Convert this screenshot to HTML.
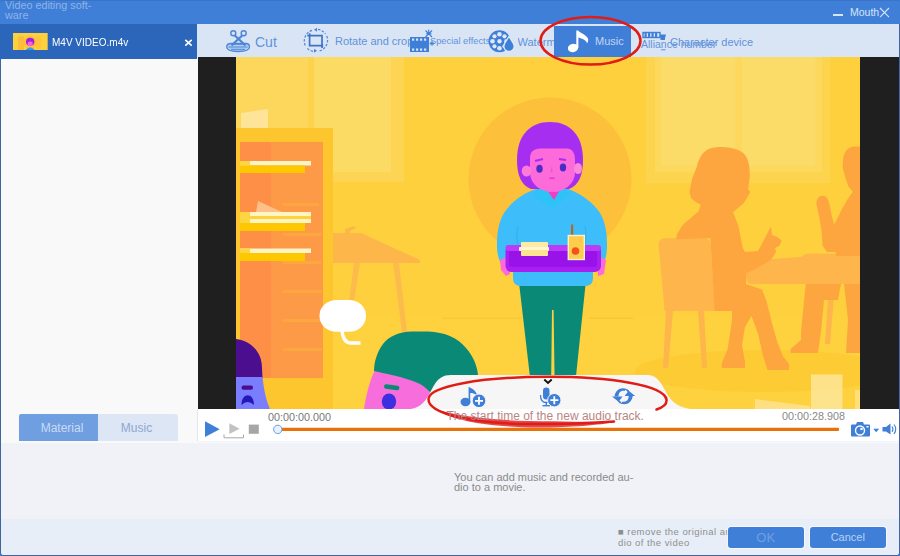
<!DOCTYPE html>
<html>
<head>
<meta charset="utf-8">
<title>Video editing software</title>
<style>
*{box-sizing:border-box;margin:0;padding:0}
html,body{width:900px;height:556px;overflow:hidden;background:#3f7fd7;font-family:"Liberation Sans",sans-serif}
#win{position:absolute;left:0;top:0;width:900px;height:556px;background:#3f66a2;overflow:hidden;border-radius:3px 3px 4px 4px}
#inner{left:1px;top:24px;width:898px;height:531px;background:#f0f3f8;border-radius:0 0 3px 3px}
.abs{position:absolute}
#title{left:0;top:0;width:900px;height:24px;background:#3f7fd7;border-top:1px solid #3a74c6}
#ttext{left:5px;top:0px;width:100px;color:#8fb3e8;font-size:10.8px;line-height:10px;white-space:nowrap}
#mouth{left:850px;top:5px;color:#d5e4f8;font-size:10.5px;line-height:14px}
#lefttab{left:0;top:24px;width:197px;height:36px;background:#2c66ba}
#fname{left:51.5px;top:35px;color:#fff;font-size:11.2px;line-height:14px;transform:scaleX(.895);transform-origin:0 0;white-space:nowrap}
#toolbar{left:197px;top:24px;width:702px;height:33px;background:#d9e5f5}
.tb{color:#6192db;font-size:11px;line-height:14px;white-space:nowrap}
#leftpanel{left:1px;top:59px;width:197px;height:383px;background:#f9f9fa}
#videobg{left:198px;top:57px;width:701px;height:352px;background:#1f1f1f}
#ctrl{left:197px;top:409px;width:702px;height:32px;background:#fff;border-left:1px solid #e2e6ee}
#bottom{left:1px;top:442px;width:898px;height:77px;background:#f0f2f7;border-top:1px solid #f8f9fb}
#bottom2{left:1px;top:519px;width:898px;height:36px;background:#e8eef8;border-radius:0 0 3px 3px}
.btn{background:#3f7fd7;box-shadow:0 0 0 1px rgba(255,255,255,.55);color:#cfe0f7;font-size:12px;text-align:center;line-height:21px;height:21px;top:527px}
.time{color:#777;font-size:11px;line-height:12px}
</style>
</head>
<body>
<div id="win">
<div id="inner" class="abs"></div>
<div id="title" class="abs"></div>
<div id="ttext" class="abs">Video editing soft-<br>ware</div>
<div id="mouth" class="abs">Mouth</div>
<div id="lefttab" class="abs"></div>
<div id="fname" class="abs">M4V VIDEO.m4v</div>
<div id="toolbar" class="abs"></div>
<div id="leftpanel" class="abs"></div>
<div id="videobg" class="abs"></div>

<svg class="abs" style="left:236px;top:57px" width="624" height="352" viewBox="236 57 624 352">
<rect x="236" y="57" width="624" height="352" fill="#fed03e"/>
<!-- floor -->
<rect x="236" y="318" width="624" height="91" fill="#fed13f"/>
<ellipse cx="765" cy="371" rx="130" ry="21" fill="#fdcb33"/><rect x="589" y="317.500" width="44" height="1.500" fill="#f8c538"/><rect x="442" y="317.500" width="80" height="1.500" fill="#f9c83a"/>
<!-- left window -->
<rect x="236" y="57" width="168" height="125" fill="#fdd453"/>
<rect x="236" y="57" width="72" height="115" fill="#fdd75c"/>
<rect x="308" y="57" width="6" height="125" fill="#fdd24c"/>
<rect x="314" y="57" width="77" height="115" fill="#fcdb65"/>
<!-- right window -->
<rect x="646" y="57" width="184" height="126" fill="#fdd44e"/>
<rect x="655" y="57" width="167" height="115.300" fill="#fcd85c"/>
<rect x="661" y="57" width="74.300" height="108.700" fill="#fcdc69"/>
<rect x="742" y="57" width="73.300" height="108.700" fill="#fcdc69"/>
<!-- halo -->
<circle cx="550" cy="179" r="81.500" fill="#fdc03a"/>
<!-- table left -->
<path d="M333,233 L361,233 L420,260 L420,263 L333,263 Z" fill="#fdb64a"/>
<path d="M345,233 L345,229 L354,226 L356,228 L350,231 L350,233 Z" fill="#fdb64a"/>
<path d="M354,263 L360,263 L354,302 L349,302 Z" fill="#fdbb4c"/>
<path d="M393,263 L399,263 L408,340 L403,340 Z" fill="#fdbb4c"/>
<!-- shelf -->
<path d="M241,113 L268,109 L268,128 L241,128 Z" fill="#fde498"/>
<rect x="236" y="128" width="97" height="281" fill="#fdc52e"/>
<rect x="240" y="142" width="83" height="236" fill="#fd9a48"/>
<rect x="240" y="142" width="31" height="236" fill="#fd8f47"/>
<g fill="#fda83f">
<rect x="283" y="203" width="36" height="3"/><rect x="283" y="233" width="38" height="3"/><rect x="283" y="261" width="38" height="3"/>
<rect x="283" y="290" width="39" height="3"/><rect x="283" y="319" width="39" height="3"/><rect x="283" y="348" width="39" height="3"/>
</g>
<path d="M256,212 L258,201 L282,212 Z" fill="#fdc08a"/>
<g>
<rect x="240" y="161" width="71" height="4.500" fill="#fff4c4"/><rect x="240" y="165.500" width="65" height="7.500" fill="#fdc800"/>
<rect x="240" y="212" width="71" height="4" fill="#fff4c4"/><rect x="240" y="216" width="71" height="3" fill="#fdd23a"/>
<rect x="240" y="219" width="71" height="4" fill="#fff4c4"/><rect x="240" y="223" width="65" height="8" fill="#fdc800"/>
<rect x="240" y="248.500" width="71" height="4.500" fill="#fff4c4"/><rect x="240" y="253" width="65" height="8" fill="#fdc800"/>
<rect x="240" y="161" width="10" height="4.500" fill="#fdd540"/><rect x="240" y="212" width="10" height="11" fill="#fdd540"/><rect x="240" y="248.500" width="10" height="4.500" fill="#fdd540"/>
</g>
<!-- silhouettes right -->
<g fill="#fdb54c">
<path d="M658.600,245 Q658.600,238.200 665,238.200 L704,238.200 Q710.400,238.200 710.600,245 L714.700,303 L745,305.500 L745,311 L664.500,311 L664,303 Z"/>
<path d="M666,311 L673,311 L668,368 L663,368 Z"/><path d="M698,311 L704,311 L707,368 L702,368 Z"/>
<path d="M746,272 Q746,262 760,260 L800,257 L860,256 L860,284 L752,284 Q746,284 746,277 Z"/>
<path d="M801,257 L806,253.800 L841,253.800 L845,257 Z"/>
<path d="M829,284 L835,284 L830,344 L825,344 Z"/>
</g>
<g fill="#fda640">
<path d="M714.700,147.500 C728,146 740,149 745,155 C749,160 750,168 749.700,177 L748.200,189.600 L750.400,191.800 L746,199.400 C744,203 742,205 740.700,205.800 L733,212.300 C735,217 737,222 738.500,226.300 L740.600,237 L742.800,248 L745,252 L758,251 L762,243.600 L767.600,232.800 L770.900,226.300 L772,235 L777.300,237 L781.700,240.400 L779.500,245.800 L775,248 L776,252 L770.900,260 L753.600,270 L746,273 L746,284 L762,289.400 L766.500,301 L773,327 L777.300,342 L782.800,356 L789,364 L789,370 L767.500,370 L763,356 L758,333.600 L751.400,316 L745,327 L742,345 L745,362 L745,368 L722,368 L721.600,364 L727.700,348.700 L732,320 L732,311 L714.700,311 L710.400,238.200 L675.900,239.300 L677,233.900 L682.400,225.300 L691,217.700 L698.600,211.200 L700.700,204.700 L696.400,202.600 L691,198.300 L689.500,191.800 L692,178.900 L696.400,168 C699,155 706,148 714.700,147.500 Z"/>
<path d="M860,146.500 L852.800,146.500 C848,147 844,152 843,159.400 L842.700,168 L845.300,177.800 L848.500,186.400 L852.800,191.800 L847.400,199.400 L842,209 L835.500,222 L832.300,226.300 L836,256 L860,256 Z"/>
<path d="M822.600,195.700 C818,196 816,200 816.500,204.700 L819.400,217.700 L821.500,230.600 L822.600,245.800 L827,252 L836,252 L838,240 L832.300,217.700 L829,202.600 C828,198 826,195.500 822.600,195.700 Z"/>
<path d="M805.700,284 L841,284 L838,300 L824,300 L821,331.700 L818,353 L790.500,353 L790.500,349 L801,340 L801,331.700 Z"/>
<path d="M844,284 L860,284 L860,353 L846,353 L848,320 Z"/>
</g>
<!-- glass -->
<rect x="811" y="374.500" width="31.500" height="34.500" fill="#fde7a0" opacity=".8"/><rect x="855" y="390" width="5" height="19" fill="#fde7a0" opacity=".6"/>
<path d="M755,409 L755,399 L810,406 L810,409 Z" fill="#fde7a0" opacity=".7"/>
<!-- speech bubble -->
<rect x="319.500" y="300" width="46.500" height="31.800" rx="17" ry="15.500" fill="#fff"/>
<path d="M342,330 Q343,343 351,343 L360.500,343" fill="none" stroke="#fff" stroke-width="3.300"/>
<!-- centre character -->
<path d="M518.700,280 L586,280 L572.600,409 L555,409 L553.600,310 L552,310 L550.800,409 L533.700,409 Z" fill="#0a8a76"/>
<path d="M536,189 C524,193 511,202 504,213 C498,223 497,235 497,245 C497,262 503,268 513,272 L513,278 Q513,286 521,286 L585,286 Q593,286 593,278 L593,272 C602,268 607,262 607,245 C607,235 606,223 600,213 C593,202 580,193 568,189 Z" fill="#3dbdf9"/>
<path d="M533,195 L539,186 L563,186 L569,195 L555,207 L550,207 Z" fill="#2ec3f6"/><path d="M518,226 Q516,236 518,246 M585,226 Q587,236 585,246" fill="none" stroke="#35b0ee" stroke-width="1.200"/>
<path d="M544,186 L562,186 L554,200 Z" fill="#f03fc4"/>
<path d="M517,160 C517,135 530,122 550,122 C570,122 583,135 583,160 C583,175 579,185 569,189 L531,189 C521,185 517,175 517,160 Z" fill="#a62ef0"/>
<path d="M530,158 C530,152 534,148.500 540,148.500 L567,148.500 C572,148.500 575,153 575,160 L575,172 C575,184 564,192 553,192 C540,192 530,184 530,172 Z" fill="#fd6ad9"/>
<ellipse cx="526.500" cy="171" rx="4.800" ry="5.500" fill="#fd7adb"/><ellipse cx="578" cy="168.500" rx="4" ry="5.500" fill="#fd8ad8"/>
<ellipse cx="539.500" cy="168.700" rx="3.200" ry="4" fill="#4a2dc8"/><ellipse cx="563" cy="167.600" rx="3.200" ry="4" fill="#4a2dc8"/>
<path d="M535,161 L543,159" stroke="#a62ef5" stroke-width="2"/><path d="M559,159 L566,160" stroke="#a62ef5" stroke-width="2"/>
<rect x="549.500" y="177.300" width="5" height="1.800" fill="#e63fc0"/><path d="M552,166 L550.500,172 L552.500,172 Z" fill="#e855c8"/>
<!-- hands -->
<path d="M500,260 L508,256 L510,274 L506,276 L501,270 Z" fill="#fd6ad9"/><path d="M598,256 L606,260 L604,274 L598,276 Z" fill="#fd6ad9"/>
<!-- tray -->
<rect x="505.500" y="245" width="95.500" height="27" rx="6" fill="#a820f1"/>
<rect x="509" y="249" width="88" height="18" rx="3" fill="#9a12ea"/>
<rect x="505.500" y="245" width="95.500" height="6" rx="3" fill="#bb3cf6"/>
<!-- sandwich -->
<rect x="521" y="242" width="27" height="6" rx="1" fill="#fdeaa5"/><rect x="519" y="247" width="30" height="4" rx="1" fill="#fff6d5"/><rect x="521" y="250" width="27" height="6" rx="1" fill="#fde490"/>
<!-- juice -->
<rect x="571" y="224.500" width="2.200" height="11" fill="#b06a2a"/>
<rect x="568.300" y="235.500" width="16" height="24" fill="#fdcc4a" stroke="#fff0c8" stroke-width="1.400"/>
<circle cx="575.500" cy="251" r="3.800" fill="#f4511e"/>
<!-- purple head -->
<path d="M236,339 C251,341 262,352 262,368 L262.500,378 L236,378 Z" fill="#4a0e8e"/>
<path d="M236,377 L262.500,377 C264,390 266,400 270,409 L236,409 Z" fill="#7b7dff"/>
<rect x="241.500" y="385.500" width="11.500" height="4.200" rx="2" fill="#4a0e8e"/>
<path d="M241.500,405 C241.500,392 254,392 254,405 Q247.500,399 241.500,405 Z" fill="#2418b8"/>
<!-- green head -->
<path d="M364,409 C366,395 370,380 375,370 L420,378 L445,409 Z" fill="#f76ddb"/>
<path d="M374,371 C374,362 377,352 383,344 C389,336 399,332 412,331.500 L428,331.500 C445,332 458,338 466,348 C473,356 477,365 478,375 L478,409 L440,409 C436,398 430,390 420,384 C410,379 395,375.500 374,371 Z" fill="#0a8a76"/>
<rect x="384" y="385" width="15.500" height="4.500" rx="2.200" fill="#0a8a76" transform="rotate(8 392 387)"/>
<ellipse cx="389" cy="401.500" rx="7.200" ry="8" fill="#3d2fe0"/>
<!-- bottom tab -->
<path d="M411,409 C424,407 428,396 433,387 C438,378 443,375 451,375 L648,375 C658,375 662,385 667,394 C672,402 678,407 690,409 Z" fill="#f6f6f6"/>
</svg>
<div id="ctrl" class="abs"></div>
<div id="bottom" class="abs"></div>
<div id="bottom2" class="abs"></div>
<!-- title bar controls -->
<div class="abs" style="left:833px;top:14px;width:10px;height:1.500px;background:#d5e4f8"></div>
<svg class="abs" style="left:878px;top:6px" width="13" height="13" viewBox="0 0 13 13"><path d="M2,2 L11,11.200 M11,2 L2,11.200" stroke="#d5e4f8" stroke-width="1.100" fill="none"/></svg>
<!-- file tab -->
<svg class="abs" style="left:13px;top:32.700px" width="34.700" height="17.800" viewBox="13 32.700 34.700 17.800">
<rect x="13" y="32.700" width="34.700" height="17.800" fill="#fdd03e"/><rect x="18" y="36" width="6" height="14.500" fill="#fdb63c" opacity=".8"/><rect x="36" y="36" width="5" height="12" fill="#fdc03a" opacity=".6"/>
<circle cx="30.200" cy="42" r="6.500" fill="#fdc03a"/>
<path d="M25,50.500 Q30.200,43.500 35.500,50.500 Z" fill="#2f9df0"/>
<ellipse cx="30.200" cy="41.500" rx="4.200" ry="4" fill="#a21fe0"/><ellipse cx="30.200" cy="43.500" rx="2.600" ry="2.300" fill="#fd5fd6"/>
</svg>
<svg class="abs" style="left:183px;top:37px" width="11" height="11" viewBox="0 0 11 11"><path d="M2.300,2.800 L8.700,8.700 M8.700,2.800 L2.300,8.700" stroke="#fff" stroke-width="1.600" fill="none"/></svg>
<!-- toolbar -->
<div class="abs" style="left:554px;top:25.500px;width:76.500px;height:31px;background:#3f7fd7"></div>
<div class="abs tb" style="left:255px;top:34px;font-size:14px;line-height:16px">Cut</div>
<div class="abs tb" style="left:335px;top:34px">Rotate and crop</div>
<div class="abs tb" style="left:430px;top:35px;font-size:9.300px;line-height:12px">Special effects</div>
<div class="abs tb" style="left:517.500px;top:35px;width:36.500px;overflow:hidden">Watermark</div>
<div class="abs tb" style="left:595px;top:34px;color:#c3d6f3">Music</div>
<div class="abs tb" style="left:670px;top:35px;font-size:11px">Character device</div>
<div class="abs tb" style="left:641px;top:37px;font-size:10.500px">Alliance number</div>
<!-- icons toolbar -->
<svg class="abs" style="left:224px;top:28px" width="28" height="27" viewBox="224 28 28 27" fill="none" stroke="#4c86d8" stroke-width="1.400">
<path d="M226.700,47 C226.700,44.500 229,43.500 231,43.500 L246,43.500 C248,43.500 249.500,44.500 249.500,47 C249.500,50 244,51.500 238,51.500 C232,51.500 226.700,50 226.700,47 Z" fill="#b3cdf0" stroke-width="1.300"/>
<path d="M228.500,47 L247.500,47 M231,49.300 L245,49.300" stroke-width="1"/>
<circle cx="233.300" cy="33.300" r="2.500"/><circle cx="243.700" cy="33.300" r="2.500"/>
<path d="M234.800,35.500 L245.500,45.500 M242.200,35.500 L231.500,45.500" stroke-width="2.300"/>
<path d="M233.500,44.200 L243.500,44.200" stroke-width="1.300"/>
</svg>
<svg class="abs" style="left:302px;top:27px" width="27" height="27" viewBox="0 0 27 27" fill="none" stroke="#4c86d8" stroke-width="1.500">
<path d="M7.600,6.300 L7.600,18.700 L21.300,18.700" stroke="#3d74c8" stroke-width="1.700"/><path d="M5.300,8.600 L20,8.600 L20,21" stroke="#3d74c8" stroke-width="1.700"/>
<path d="M3.200,18.500 A11.300,11.300 0 0 1 10,3.300" stroke-dasharray="2.500 1.500" stroke-width="1.200"/>
<path d="M24.800,9 A11.300,11.300 0 0 1 17.500,24" stroke-dasharray="2.500 1.500" stroke-width="1.200"/><path d="M16,2.400 A11.300,11.300 0 0 1 23.500,7" stroke-dasharray="2.500 1.500" stroke-width="1.200"/><path d="M11,24.300 A11.300,11.300 0 0 1 4.500,20.500" stroke-dasharray="2.500 1.500" stroke-width="1.200"/>
<path d="M15,0.800 L12,2.800 L15,4.800 Z" fill="#4c86d8" stroke="none"/><path d="M12,21.800 L15,23.800 L12,25.800 Z" fill="#4c86d8" stroke="none"/>
</svg>
<svg class="abs" style="left:409px;top:28px" width="30" height="26" viewBox="0 0 30 26">
<rect x="1" y="9" width="19" height="15" fill="#3f7fd7"/>
<g fill="#d9e5f5"><rect x="3" y="10.500" width="2.200" height="2.200"/><rect x="7" y="10.500" width="2.200" height="2.200"/><rect x="11" y="10.500" width="2.200" height="2.200"/><rect x="15" y="10.500" width="2.200" height="2.200"/>
<rect x="3" y="20.500" width="2.200" height="2.200"/><rect x="7" y="20.500" width="2.200" height="2.200"/><rect x="11" y="20.500" width="2.200" height="2.200"/><rect x="15" y="20.500" width="2.200" height="2.200"/></g>
<path d="M16.500,2.500 L23,9 M23,2.500 L16.500,9 M19.700,1.500 L19.700,6 M17,5.700 L22.500,5.700" stroke="#3f7fd7" stroke-width="1.100"/>
<path d="M23,13 L23,18 M20.500,15.500 L25.500,15.500 M21.300,13.800 L24.700,17.200 M24.700,13.800 L21.300,17.200" stroke="#3f7fd7" stroke-width=".9"/>
</svg>
<svg class="abs" style="left:487px;top:29px" width="30" height="28" viewBox="487 29 30 28">
<circle cx="499.500" cy="41.300" r="11" fill="#3f7fd7"/>
<g fill="#dfe9f7"><circle cx="499.500" cy="34.300" r="2.300"/><circle cx="499.500" cy="48.300" r="2.300"/><circle cx="492.500" cy="41.300" r="2.300"/><circle cx="506.500" cy="41.300" r="2.300"/><circle cx="499.500" cy="41.300" r="2.200"/>
<circle cx="494.500" cy="36.300" r="2.100"/><circle cx="504.500" cy="36.300" r="2.100"/><circle cx="494.500" cy="46.300" r="2.100"/><circle cx="504.500" cy="46.300" r="2.100"/></g>
<path d="M509,36.500 C506,41.500 503.800,43.500 503.800,46.300 A5.200,5.200 0 0 0 514.200,46.300 C514.200,43.500 512,41.500 509,36.500 Z" fill="#3f7fd7" stroke="#dfe9f7" stroke-width="1.300"/>
</svg>
<svg class="abs" style="left:566px;top:28px" width="26" height="28" viewBox="566 28 26 28">
<ellipse cx="573" cy="48" rx="5.200" ry="4.200" fill="#fff" transform="rotate(-15 573 48)"/>
<path d="M576.300,48 L576.300,30.500 L578.200,30.500 C580,33 585.500,34 588,38.500 C588.500,40 588,42 587,43.500 C587,40.500 582,38.500 578.400,37.500 L578.400,48 Z" fill="#fff"/>
</svg>
<svg class="abs" style="left:641px;top:29px" width="28" height="24" viewBox="641 29 28 24">
<rect x="643" y="32.500" width="17" height="5" fill="none" stroke="#3f7fd7" stroke-width="1.400"/>
<g fill="#3f7fd7"><rect x="644.500" y="33" width="2.200" height="4"/><rect x="648" y="33" width="2.200" height="4"/><rect x="651.500" y="33" width="2.200" height="4"/><rect x="655" y="33" width="2.200" height="4"/>
<path d="M659.500,34.500 L666,34.500 L665,38 L660.500,38 Z"/><rect x="660.500" y="38" width="4.500" height="2"/><rect x="661" y="49.300" width="4.500" height="1" fill="#5d90da"/></g>
</svg>
<!-- left tabs -->
<div class="abs" style="left:19px;top:414px;width:79px;height:27px;background:#6f9fe1;color:#c9daf4;font-size:12px;line-height:29px;text-align:center;border-radius:2px 0 0 0;padding-left:7px">Material</div>
<div class="abs" style="left:98px;top:414px;width:80px;height:27px;background:#dce6f5;color:#8fa6cf;font-size:12px;line-height:29px;text-align:center;border-radius:0 3px 0 0;padding-right:3px">Music</div>
<!-- controls -->
<svg class="abs" style="left:198px;top:409px" width="701" height="32" viewBox="198 409 701 32">
<path d="M205,421.300 L219.700,429.200 L205,437 Z" fill="#3f7fd7"/>
<path d="M229.300,423.300 L239.700,428.700 L229.300,434 Z" fill="#c2c2c2"/>
<path d="M224,434.500 L224,437.800 L243.500,437.800 L243.500,434.500" fill="none" stroke="#a8a8a8" stroke-width="1"/>
<rect x="248.800" y="424.600" width="10" height="9.200" fill="#a6a6a6"/>
<rect x="281" y="427.800" width="558" height="3.200" rx="1" fill="#e8710a"/>
<circle cx="277.800" cy="429.400" r="4.200" fill="#e9f1fc" stroke="#6c9de2" stroke-width="1"/>
<!-- camera -->
<path d="M852,424.500 L856,424.500 L857,422 L863,422 L864,424.500 L869,424.500 Q870,424.500 870,425.500 L870,435.500 Q870,436.500 869,436.500 L852,436.500 Q851,436.500 851,435.500 L851,425.500 Q851,424.500 852,424.500 Z" fill="#3f7fd7"/>
<circle cx="860" cy="430.500" r="4.500" fill="#3f7fd7" stroke="#fff" stroke-width="1.400"/><circle cx="861.500" cy="429" r="1.300" fill="#fff"/>
<rect x="866.500" y="426" width="2" height="1.500" fill="#fff"/>
<path d="M873.300,428.800 L879.200,428.800 L876.200,432.300 Z" fill="#3f7fd7"/>
<path d="M882.500,427 L886,427 L890.500,423.500 L890.500,434.500 L886,431.500 L882.500,431.500 Z" fill="#3f7fd7"/>
<path d="M892,426.500 Q894,429 892,431.800 M894,424.500 Q897.500,429 894,434" fill="none" stroke="#3f7fd7" stroke-width="1.100"/>
</svg>
<div class="abs time" style="left:268px;top:411px;font-size:10.800px">00:00:00.000</div>
<div class="abs time" style="left:782px;top:410px;font-size:10.800px;color:#888">00:00:28.908</div>
<!-- bottom tab icons -->
<svg class="abs" style="left:420px;top:370px" width="270" height="62" viewBox="420 370 270 62">
<g fill="#3f7fd7">
<ellipse cx="465.500" cy="402" rx="5" ry="4.200"/>
<path d="M468.600,402.500 L468.600,387 C472,388 476.500,391 477.500,396 C475,393.500 472,393 470.200,393 L470.200,402.500 Z"/>
<circle cx="479" cy="400.800" r="6.800" stroke="#f6f6f6" stroke-width="1"/>
<rect x="543" y="387.500" width="6.500" height="12" rx="3.200"/>
<path d="M540.500,395 Q540.500,402.500 546.200,402.500 Q549,402.500 550.500,401" fill="none" stroke="#3f7fd7" stroke-width="1.300"/>
<rect x="545.600" y="402.500" width="1.400" height="3"/><rect x="542.500" y="405" width="7.500" height="1.400"/>
<circle cx="554.300" cy="400.200" r="6.700" stroke="#f6f6f6" stroke-width="1"/>
</g>
<path d="M479,396.800 L479,404.800 M475,400.800 L483,400.800 M554.300,396.200 L554.300,404.200 M550.300,400.200 L558.300,400.200" stroke="#fff" stroke-width="1.800"/>
<path d="M544.300,379.500 L548,383 L551.700,379.500" fill="none" stroke="#111" stroke-width="1.900"/>
<g fill="#3f7fd7">
<path d="M612,396.500 L622.500,396.500 L619.500,400.500 Q621,403 624,403.500 Q620,405 617,400.500 Z"/>
<path d="M614.500,396.500 C615,390.500 621,386.500 626,389 L624.500,391 C621,390 618.500,392.500 618.500,396.500 Z"/>
<path d="M635.200,396 L624.700,396 L627.700,392 Q626.200,389.500 623.200,389 Q627.200,387.500 630.200,392 Z"/>
<path d="M632.700,396 C632.200,402 626.200,406 621.200,403.500 L622.700,401.500 C626.200,402.500 628.700,400 628.700,396 Z"/>
</g>
</svg>
<!-- red marks -->
<svg class="abs" style="left:0;top:0" width="900" height="556" viewBox="0 0 900 556" fill="none">
<defs><filter id="bl" x="-5%" y="-50%" width="110%" height="200%"><feGaussianBlur stdDeviation=".7"/></filter></defs>
<ellipse cx="590.500" cy="40.700" rx="50" ry="23.800" stroke="#e01c14" stroke-width="2.500"/>
<path d="M656.500,409.500 C664,407 667,403 666.500,399.500 C664,385 610,376.800 548,376.800 C480,376.800 429,386.500 428.500,399 C428,413 468,423.500 530,424 C565,424 595,423 614,421.500" stroke="#e01c14" stroke-width="2.500" stroke-linecap="round"/>
<path d="M438,410 C452,421 492,427.500 540,427.500 C570,427.500 600,425 616,422 C592,422 560,421.500 530,421 C492,420 458,416 438,410 Z" fill="#e01b1b" opacity=".8" filter="url(#bl)"/>
</svg>
<div class="abs" style="left:446.500px;top:409.200px;color:#b88585;font-size:12px;line-height:14px;white-space:nowrap">The start time of the new audio track.</div>
<!-- bottom texts -->
<div class="abs" style="left:454px;top:471.800px;color:#8a8a8a;font-size:11px;line-height:10px;white-space:nowrap">You can add music and recorded au-<br>dio to a movie.</div>
<div class="abs" style="left:618px;top:525.500px;color:#8e8e8e;font-size:9.500px;line-height:11px;white-space:nowrap;letter-spacing:.45px">■ remove the original au<br>dio of the video</div>
<div class="abs btn" style="left:727.500px;width:76.500px;font-size:13px;color:#6f9fe6;border-radius:3px">OK</div>
<div class="abs btn" style="left:809.500px;width:76.500px;font-size:11px;color:#b9d0f3;border-radius:3px">Cancel</div>

</div>
</body>
</html>
